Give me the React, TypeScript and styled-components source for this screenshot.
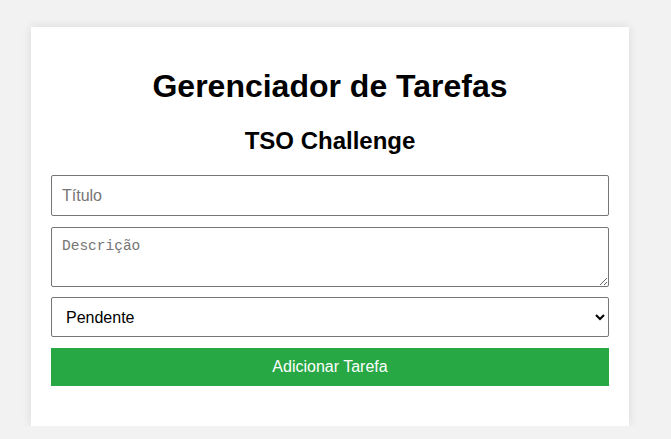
import React from "react";
import styled, { createGlobalStyle } from "styled-components";

const GlobalStyle = createGlobalStyle`
  html, body {
    margin: 0;
    padding: 0;
    background: #f2f2f2;
    font-family: "Liberation Sans", Arial, sans-serif;
  }
  * { box-sizing: border-box; }
`;

const Page = styled.div`
  padding: 27px 0 0 31px;
`;

const Card = styled.div`
  width: 598px;
  background: #ffffff;
  padding: 20px;
  box-shadow: 0 0 10px rgba(0, 0, 0, 0.1);
`;

const Title = styled.h1`
  margin: 21px 0 22px;
  text-align: center;
  font-size: 32px;
  font-weight: bold;
  color: #000;
`;

const Subtitle = styled.h2`
  margin: 20px 0 20px;
  text-align: center;
  font-size: 24px;
  font-weight: bold;
  color: #000;
`;

const Form = styled.form`
  display: flex;
  flex-direction: column;
`;

const fieldBase = `
  width: 100%;
  margin: 0;
  padding: 10px;
  font-size: 16px;
  border: 1px solid #767676;
  border-radius: 2px;
  background: #fff;
  color: #000;
  outline: none;
`;

const TextInput = styled.input`
  ${fieldBase}
  height: 41px;
  margin-bottom: 11px;
  font-family: "Liberation Sans", Arial, sans-serif;
  &::placeholder { color: #757575; }
`;

const TextArea = styled.textarea`
  ${fieldBase}
  height: 60px;
  margin-bottom: 10px;
  display: block;
  font-family: "Liberation Mono", monospace;
  font-size: 14.5px;
  resize: vertical;
  &::placeholder { color: #757575; }
`;

const Select = styled.select`
  ${fieldBase}
  height: 40px;
  margin-bottom: 11px;
  padding: 0 10px 0 10px;
  font-family: "Liberation Sans", Arial, sans-serif;
`;

const SubmitButton = styled.button`
  width: 100%;
  height: 38px;
  margin: 0;
  padding: 10px;
  border: none;
  background: #28a745;
  color: #fff;
  font-size: 16px;
  font-family: "Liberation Sans", Arial, sans-serif;
  cursor: pointer;
`;

const Spacer = styled.div`
  height: 20px;
`;

export default function App() {
  return (
    <>
      <GlobalStyle />
      <Page>
        <Card>
          <Title>Gerenciador de Tarefas</Title>
          <Subtitle>TSO Challenge</Subtitle>
          <Form onSubmit={(e) => e.preventDefault()}>
            <TextInput type="text" placeholder="Título" />
            <TextArea placeholder="Descrição" />
            <Select defaultValue="pendente">
              <option value="pendente">Pendente</option>
              <option value="em_andamento">Em andamento</option>
              <option value="concluida">Concluída</option>
            </Select>
            <SubmitButton type="submit">Adicionar Tarefa</SubmitButton>
          </Form>
          <Spacer />
        </Card>
      </Page>
    </>
  );
}
